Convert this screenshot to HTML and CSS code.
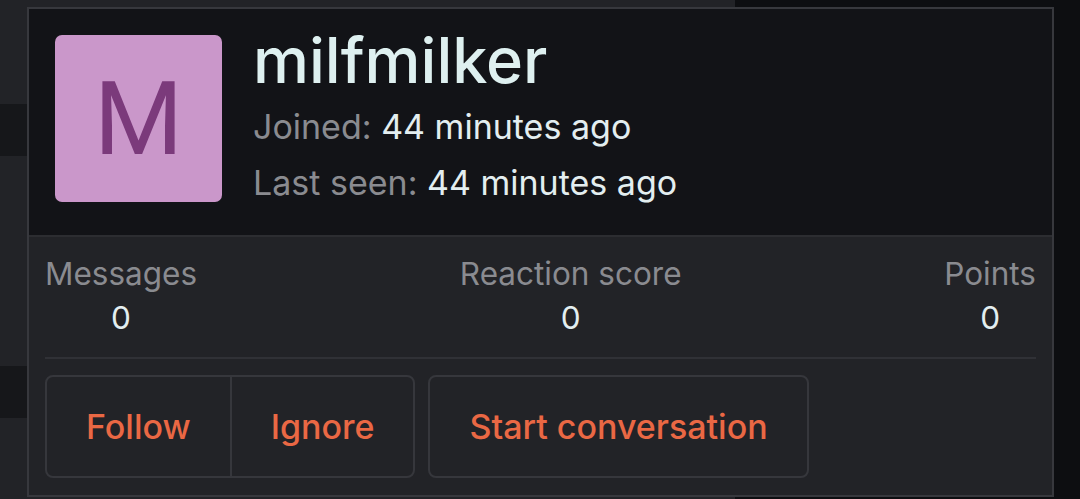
FILE: index.html
```html
<!DOCTYPE html>
<html lang="en">
<head>
  <meta charset="UTF-8">
  <meta name="viewport" content="width=device-width, initial-scale=1.0">
  <title>milfmilker</title>
  <link rel="stylesheet" href="styles.css">
</head>
<body>
  <div class="page">
    <div class="main-col">
      <div class="row"></div>
      <div class="row dark"></div>
      <div class="row tall"></div>
      <div class="row dark"></div>
      <div class="row"></div>
    </div>
    <div class="side-col"></div>
  </div>

  <div class="member-tooltip">
    <div class="tooltip-header">
      <div class="avatar">M</div>
      <div class="member-info">
        <h2 class="username">milfmilker</h2>
        <div class="info-line"><span class="muted">Joined:</span> 44 minutes ago</div>
        <div class="info-line"><span class="muted">Last seen:</span> 44 minutes ago</div>
      </div>
    </div>
    <div class="tooltip-body">
      <div class="stats">
        <dl class="stat">
          <dt>Messages</dt>
          <dd>0</dd>
        </dl>
        <dl class="stat">
          <dt>Reaction score</dt>
          <dd>0</dd>
        </dl>
        <dl class="stat">
          <dt>Points</dt>
          <dd>0</dd>
        </dl>
      </div>
      <div class="actions">
        <div class="button-group">
          <button class="btn">Follow</button>
          <button class="btn">Ignore</button>
        </div>
        <button class="btn">Start conversation</button>
      </div>
    </div>
  </div>
</body>
</html>
```

FILE: styles.css
```css
body {
  margin: 0;
  background-color: #0d0e11;
  font-family: 'Inter', 'Noto Sans', sans-serif;
  color: #e3eef0;
  overflow: hidden;
}

/* page underneath the tooltip */
.page {
  display: flex;
  height: 499px;
}

.main-col {
  width: 735px;
  display: flex;
  flex-direction: column;
  background-color: #222327;
}

.row {
  height: 104px;
  flex-shrink: 0;
}

.row.tall {
  height: 210px;
}

.row.dark {
  height: 52px;
  background-color: #16171a;
}

.side-col {
  flex-grow: 1;
  background-color: #0d0e11;
}

/* member tooltip */
.member-tooltip {
  position: absolute;
  left: 27px;
  top: 7px;
  width: 1023px;
  border: 2px solid #37383d;
  background-color: #222327;
}

.tooltip-header {
  display: flex;
  padding: 26px 26px 24px;
  background-color: #121317;
  border-bottom: 2px solid #2c2d31;
}

.avatar {
  width: 167px;
  height: 167px;
  border-radius: 7px;
  background-color: #ca97ca;
  color: #7b3a7b;
  font-family: 'Roboto', 'Liberation Sans', sans-serif;
  font-size: 102px;
  line-height: 1;
  display: flex;
  align-items: center;
  justify-content: center;
  flex-shrink: 0;
}

.member-info {
  margin-left: 31px;
}

.username {
  margin: 0 0 14px;
  font-size: 63px;
  font-weight: 500;
  line-height: 50px;
  color: #def0f0;
}

.info-line {
  font-size: 34px;
  line-height: 56px;
}

.muted {
  color: #8a8b90;
}

.tooltip-body {
  padding: 0 16px 17px;
}

.stats {
  display: flex;
  justify-content: space-between;
  padding: 15px 0 17px;
  border-bottom: 2px solid #303136;
}

.stat {
  margin: 0;
  text-align: center;
}

.stat dt {
  color: #8a8b90;
  font-size: 31.5px;
  line-height: 44px;
}

.stat dd {
  margin: 0;
  font-size: 31.5px;
  line-height: 44px;
}

.actions {
  display: flex;
  gap: 13px;
  margin-top: 16px;
}

.button-group {
  display: flex;
}

.btn {
  height: 103px;
  padding: 0 39px;
  background-color: #222327;
  border: 2px solid #36373c;
  border-radius: 8px;
  color: #ea6844;
  font-family: 'Inter', 'Noto Sans', sans-serif;
  font-size: 34px;
  font-weight: 500;
  cursor: pointer;
}

.button-group .btn:first-child {
  border-radius: 8px 0 0 8px;
  border-right: 1px solid #36373c;
}

.button-group .btn:last-child {
  border-radius: 0 8px 8px 0;
  border-left: 1px solid #36373c;
}
```
